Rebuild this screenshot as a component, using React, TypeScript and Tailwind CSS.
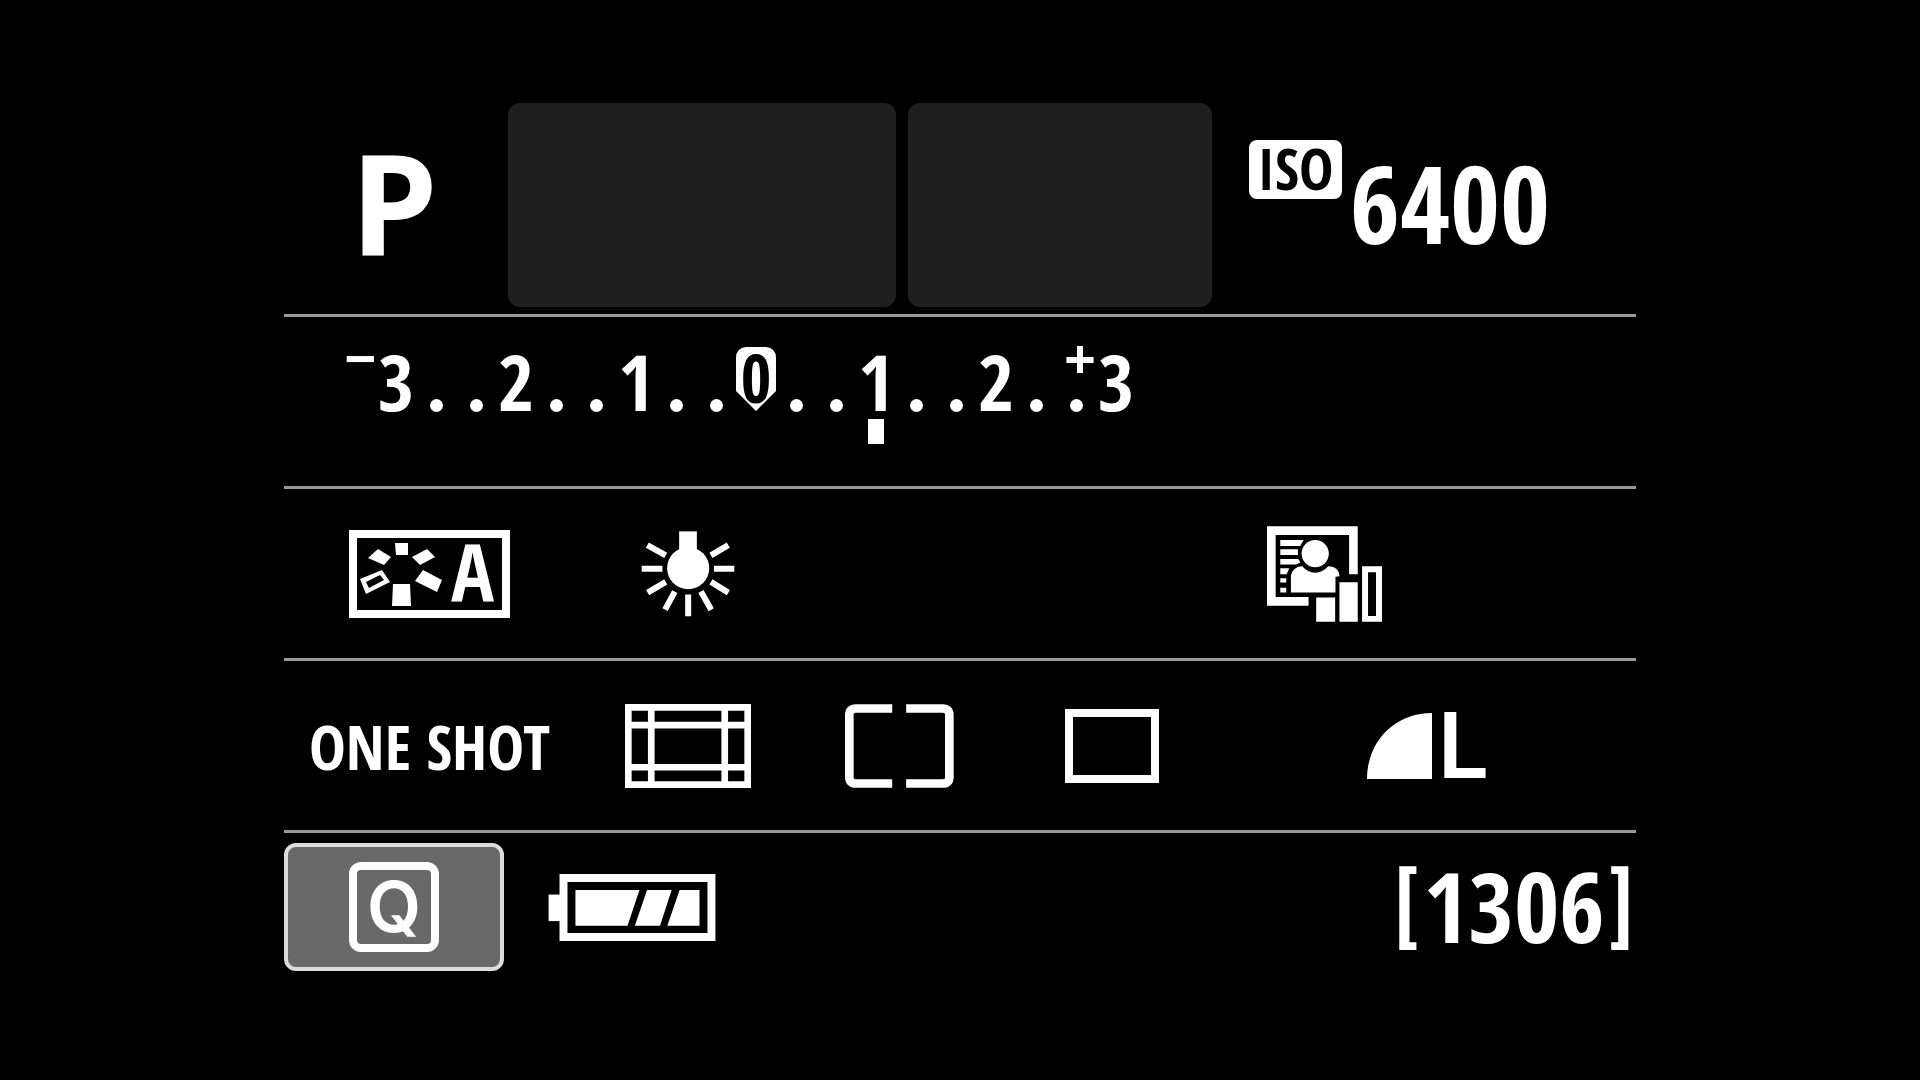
import React from 'react';

// exposure compensation scale, one mark per 1/3 stop
const STOPS = ['3', '', '', '2', '', '', '1', '', '', '0', '', '', '1', '', '', '2', '', '', '3'];
const ZERO_INDEX = 9;
const POINTER_INDEX = 12;

function Sign({ children }: { children: string }) {
  return (
    <span className="absolute -left-8 -top-2.5 font-['Noto_Sans',sans-serif] text-[56px] leading-[50px]">{children}</span>
  );
}

function StopMark({ stop, isZero }: { stop: string; isZero: boolean }) {
  if (!stop) return <span className="mt-[57px] h-[13px] w-[13px] rounded-full bg-white" />;
  if (!isZero) return <span>{stop}</span>;

  return (
    <span className="relative mt-[5px] h-16 w-10 text-center text-[66px] leading-[60px] text-black">
      <svg className="absolute inset-0 h-16 w-10" viewBox="0 0 40 64" fill="white">
        <path d="M10 0H30Q40 1 40 11V44L20 64L0 44V11Q0 1 10 0Z" />
      </svg>
      <span className="relative">{stop}</span>
    </span>
  );
}

function ExposureScale() {
  return (
    <div className="flex pl-[92px] pt-[25px] text-[78px] leading-none" role="group" aria-label="Exposure compensation">
      {STOPS.map((stop, i) => (
        <div key={i} className="relative flex w-10 justify-center">
          {i === 0 && <Sign>−</Sign>}
          {i === STOPS.length - 1 && <Sign>+</Sign>}
          <StopMark stop={stop} isZero={i === ZERO_INDEX} />
          {i === POINTER_INDEX && <span className="absolute left-3 top-[77px] h-[25px] w-4 bg-white" />}
        </div>
      ))}
    </div>
  );
}

function PictureStyleIcon() {
  return (
    <div className="relative flex h-[88px] w-[161px] items-center justify-end border-8 border-white pb-2 pr-2">
      <svg className="absolute -left-2 -top-2 h-[88px] w-[161px]" viewBox="0 0 161 88" fill="white">
        <path d="M46 13H59V25H47Z" />
        <path d="M29 19L42 27L35 35L19 28Z" />
        <path d="M78 19L86 27L71 35L63 27Z" />
        <path fillRule="evenodd" d="M11 49L33 40L41 52L17 64ZM17 52L20 58L35 50L31 45Z" />
        <path d="M74 40L93 50L88 62L66 51Z" />
        <path d="M44 54H61L62 76H43Z" />
      </svg>
      <span className="text-[80px] leading-none">A</span>
    </div>
  );
}

function TungstenIcon() {
  return (
    <svg className="h-[86px] w-[94px]" viewBox="933 62 281 257" fill="white" stroke="white" strokeWidth={18}>
      <circle cx="1074" cy="173" r="63" stroke="none" />
      <path stroke="none" d="M1047 63H1100V130H1047Z" />
      <path d="M935 175H997M1151 175H1212M952 104L1007 135M1194 104L1142 135M1007 214L953 246M1142 214L1194 246M1034 243L1005 297M1112 243L1143 297M1074 252V317" />
    </svg>
  );
}

function LightingOptimizerIcon() {
  return (
    <svg className="h-24 w-[115px]" viewBox="80 46 346 287" fill="white">
      <path d="M340 190V59H93V272H205" fill="none" stroke="white" strokeWidth={26} />
      <path d="M120 87H190L180 105H120ZM120 115H173V132H120ZM120 144H174L181 154L168 161H120ZM120 172H147L139 190H120ZM120 202H138V215H120ZM120 231H138V245H120Z" />
      <circle cx="225" cy="128" r="41" />
      <path d="M152 245V205C150 182 164 167 186 166C207 192 243 192 264 166C285 166 298 178 298 196L286 198V245Z" />
      <path d="M228 260H285V333H228ZM298 214H353V333H298Z" />
      <path fillRule="evenodd" d="M366 166H426V333H366ZM384 184V316H408V184Z" />
    </svg>
  );
}

function AfMethodIcon() {
  return (
    <svg className="h-[84px] w-[126px]" viewBox="975 40 379 252" fill="none" stroke="white" strokeWidth={20}>
      <path d="M985 50H1344V282H985ZM1054 50V282M1275 50V282M985 103H1344M985 230H1344" />
    </svg>
  );
}

function MeteringIcon() {
  return (
    <svg className="h-[84px] w-[109px]" viewBox="74 40 328 252" fill="none" stroke="white" strokeWidth={26}>
      <path d="M216 53H107Q87 53 87 73V259Q87 279 107 279H216M258 53H368Q388 53 388 73V259Q388 279 368 279H258" />
    </svg>
  );
}

function BatteryIcon() {
  return (
    <svg className="h-[67px] w-[168px]" viewBox="805 160 503 202" fill="white" role="img" aria-label="Battery level">
      <path d="M805 222H840V302H805Z" />
      <path d="M850 172H1296V350H850Z" fill="none" stroke="white" strokeWidth={24} />
      <path d="M886 208H1079L1043 316H886ZM1102 208H1176L1141 316H1065ZM1200 208H1260V316H1163Z" />
    </svg>
  );
}

const settingsRow =
  'grid h-[172px] grid-cols-[291fr_226fr_197fr_228fr_410fr] items-center justify-items-center border-t-3 border-[#989898]';

const bracket = "font-['Roboto',sans-serif] text-[86px] font-medium leading-none";

export default function App() {
  return (
    <main className="min-h-screen bg-black px-6 pt-[103px] font-['Open_Sans_Condensed','Open_Sans',sans-serif] font-bold text-white">
      <div className="mx-auto max-w-[1352px]">
        <section className="grid h-[211px] grid-cols-[224fr_400fr_304fr_424fr] pb-[7px]">
          <div className="flex items-center justify-center pb-1.5 pr-1 font-['Open_Sans',sans-serif] text-[140px] leading-none">
            P
          </div>
          <div className="mr-3 rounded-xl bg-[#1f1f1f]" />
          <div className="rounded-xl bg-[#1f1f1f]" />
          <div className="flex items-center gap-2 pl-[37px]">
            <span className="mt-[37px] flex h-[59px] w-[93px] items-center justify-center self-start rounded-lg bg-white pb-1 text-[58px] leading-none text-black">
              ISO
            </span>
            <span className="pb-1 text-[108px] leading-none">6400</span>
          </div>
        </section>

        <section className="h-[172px] border-t-3 border-[#989898]">
          <ExposureScale />
        </section>

        <section className={settingsRow}>
          <PictureStyleIcon />
          <TungstenIcon />
          <div className="col-start-5 justify-self-start pl-[41px]">
            <LightingOptimizerIcon />
          </div>
        </section>

        <section className={settingsRow}>
          <span className="whitespace-nowrap text-[62px] leading-none">ONE SHOT</span>
          <AfMethodIcon />
          <MeteringIcon />
          <div className="h-[74px] w-[94px] border-8 border-white" />
          <div className="flex items-center gap-1.5 pr-1.5">
            <svg className="h-[66px] w-[65px]" viewBox="0 0 65 66" fill="white">
              <path d="M65 0V66H0C0 28 28 0 65 0Z" />
            </svg>
            <span className="font-['Inter',sans-serif] text-[91px] font-semibold leading-none">L</span>
          </div>
        </section>

        <section className="flex items-center border-t-3 border-[#989898] pt-[10px]">
          <button
            type="button"
            aria-label="Quick control"
            className="flex h-32 w-[220px] items-center justify-center rounded-xl border-4 border-[#dcdcdc] bg-[#696969]"
          >
            <span className="flex h-[90px] w-[90px] items-center justify-center rounded-xl border-8 border-white font-['Inter',sans-serif] text-[70px] font-semibold leading-none">
              Q
            </span>
          </button>
          <div className="ml-11">
            <BatteryIcon />
          </div>
          <div className="ml-auto flex items-center gap-1.5 pr-0.5">
            <span className={bracket}>[</span>
            <span className="pb-1 text-[98px] leading-none">1306</span>
            <span className={bracket}>]</span>
          </div>
        </section>
      </div>
    </main>
  );
}
